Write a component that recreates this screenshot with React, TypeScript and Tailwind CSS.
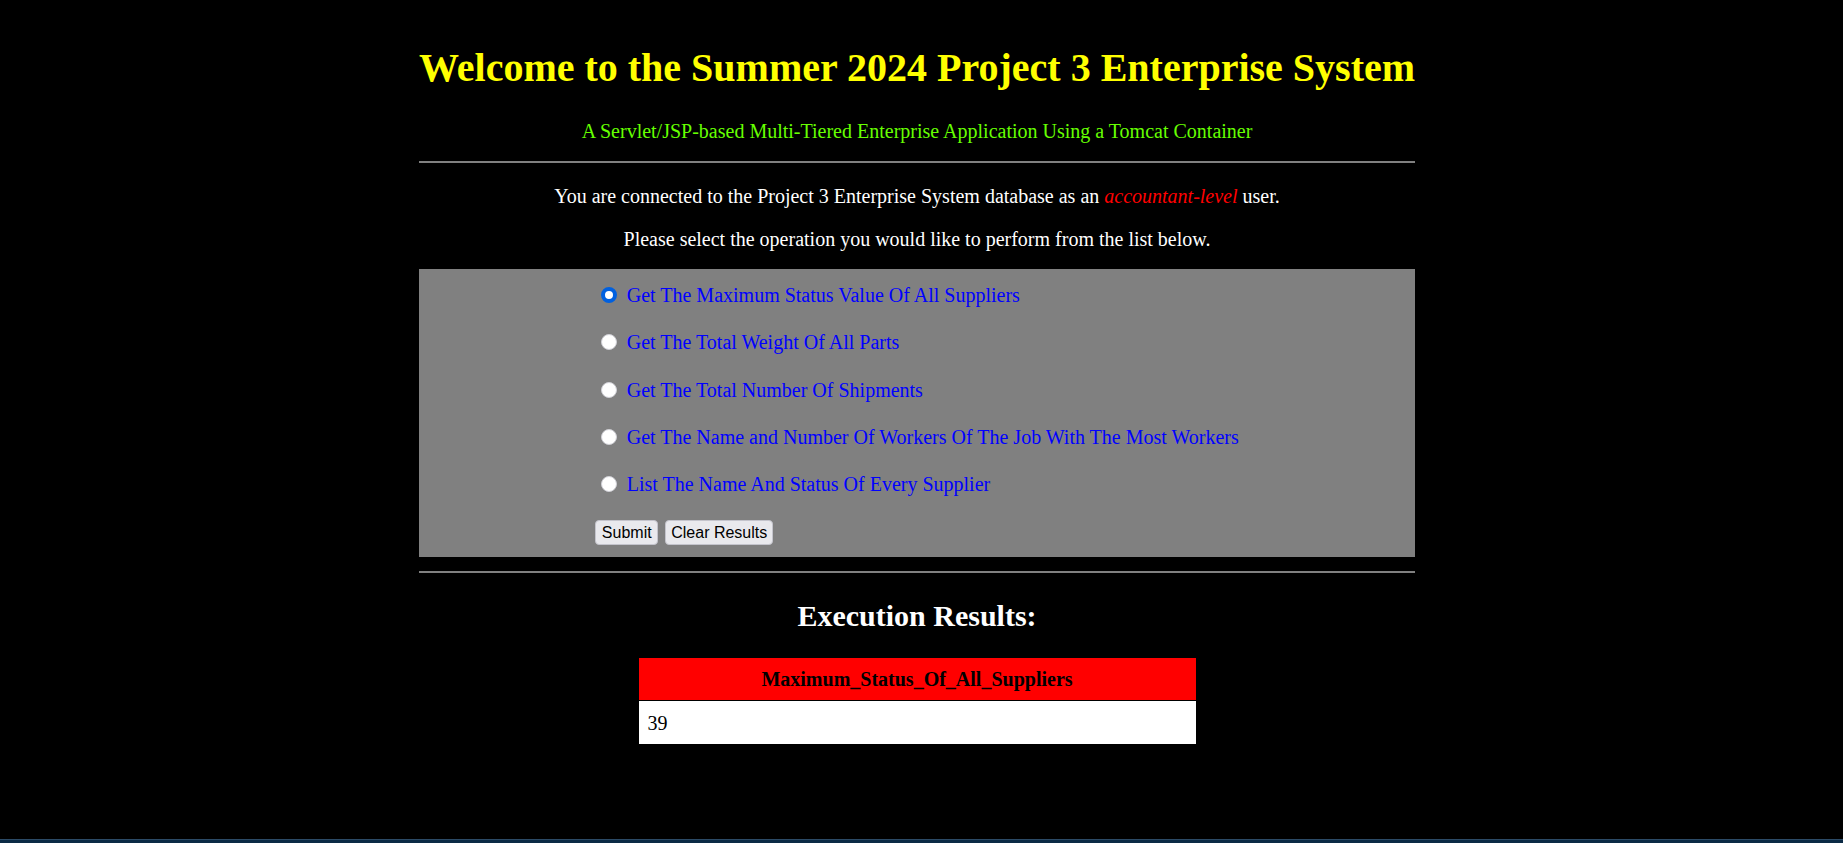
const options = [
  "Get The Maximum Status Value Of All Suppliers",
  "Get The Total Weight Of All Parts",
  "Get The Total Number Of Shipments",
  "Get The Name and Number Of Workers Of The Job With The Most Workers",
  "List The Name And Status Of Every Supplier",
];

export default function App() {
  return (
    <div className="min-h-screen bg-black flex flex-col font-['Liberation_Serif',serif]">
      <div className="flex-1 pr-[9px]">
        <div className="w-[996px] mx-auto pt-[45px] text-center">
          <h1 className="flex justify-center whitespace-nowrap text-[40px] leading-[46px] font-bold text-[#ffff00]">
            Welcome to the Summer 2024 Project 3 Enterprise System
          </h1>
          <p className="mt-[28.5px] text-[20px] leading-[22px] text-[#66ff00]">
            A Servlet/JSP-based Multi-Tiered Enterprise Application Using a Tomcat Container
          </p>
          <hr className="mt-[19.5px] h-[2px] border-0 bg-[#808080]" />
          <p className="mt-[22px] text-[20px] leading-[22px] text-white">
            You are connected to the Project 3 Enterprise System database as an{" "}
            <em className="text-[#ff0000]">accountant-level</em> user.
          </p>
          <p className="mt-[20.6px] text-[20px] leading-[22px] text-white">
            Please select the operation you would like to perform from the list below.
          </p>

          <form className="mt-[19.4px] bg-[#808080] pt-[15px] pb-[12px] flex justify-center">
            <div className="text-left">
              <div className="flex flex-col gap-[25.3px]">
                {options.map((label, i) => (
                  <label key={label} className="h-[22px] flex items-center text-[20px] leading-[22px] text-[#0000ff]">
                    <input
                      type="radio"
                      name="op"
                      defaultChecked={i === 0}
                      className="appearance-none shrink-0 ml-[6px] mr-[9.5px] w-[16px] h-[16px] rounded-full bg-white border border-[#d0d0d6] checked:border-[4px] checked:border-[#0060df]"
                    />
                    {label}
                  </label>
                ))}
              </div>
              <div className="mt-[24.8px] flex gap-[7px] font-['Liberation_Sans',sans-serif] text-[16px]">
                <button type="button" className="h-[25px] w-[63px] rounded-[4px] border border-[#c4c4cc] bg-[#e9e9ed] text-black">
                  Submit
                </button>
                <button type="button" className="h-[25px] w-[108px] rounded-[4px] border border-[#c4c4cc] bg-[#e9e9ed] text-black">
                  Clear Results
                </button>
              </div>
            </div>
          </form>

          <hr className="mt-[14px] h-[2px] border-0 bg-[#808080]" />

          <h2 className="mt-[26px] text-[30px] leading-[34px] font-bold text-white">
            Execution Results:
          </h2>

          <table className="mt-[25px] mx-auto w-[557px] border-collapse">
            <thead>
              <tr className="bg-[#ff0000]">
                <th className="h-[43px] border-b border-black text-[20px] font-bold text-black">
                  Maximum_Status_Of_All_Suppliers
                </th>
              </tr>
            </thead>
            <tbody>
              <tr className="bg-white">
                <td className="h-[43px] pl-[9px] text-left text-[20px] text-black">39</td>
              </tr>
            </tbody>
          </table>
        </div>
      </div>
      <div className="h-[4px] bg-[#0b2a45] border-t border-[#2b4a66]" />
    </div>
  );
}
